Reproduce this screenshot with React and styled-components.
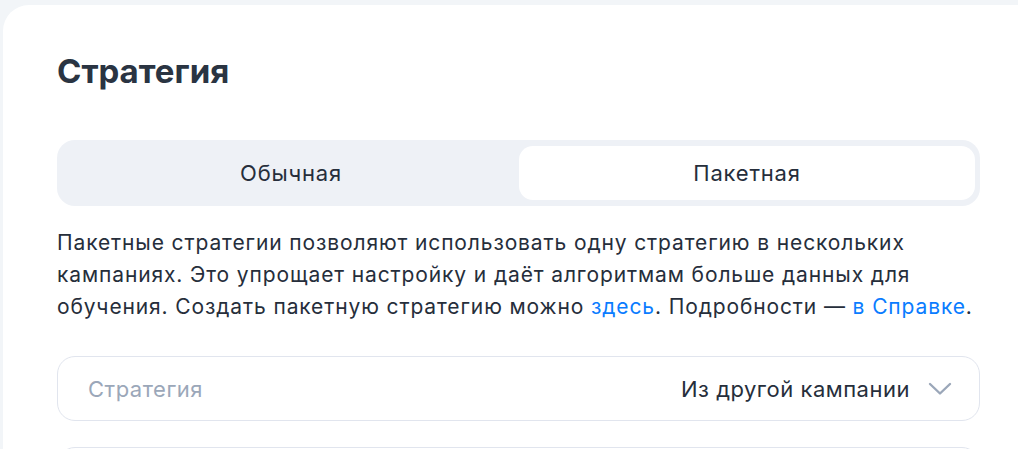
import React from "react";
import styled, { createGlobalStyle } from "styled-components";

const Global = createGlobalStyle`
  html, body { margin: 0; padding: 0; background: #f2f5f8; }
  body { font-family: Inter, "Noto Sans", sans-serif; color: #262e3b; }
  * { box-sizing: border-box; }
`;

const Page = styled.div`
  padding: 5px 0 0 3px;
  height: 449px;
  overflow: hidden;
`;

const Card = styled.section`
  background: #ffffff;
  border-top-left-radius: 26px;
  padding: 44px 38px 40px 54px;
  min-height: 600px;
`;

const Title = styled.h2`
  margin: 0;
  font-size: 33px;
  line-height: 44px;
  font-weight: 700;
  color: #2a3442;
  letter-spacing: 0;
`;

const Segmented = styled.div`
  margin-top: 47px;
  display: grid;
  grid-template-columns: 1fr 1fr;
  padding: 6px 5px 6px 6px;
  height: 66px;
  background: #eef1f6;
  border-radius: 18px;
`;

const Segment = styled.button`
  border: none;
  font: inherit;
  font-size: 22px;
  letter-spacing: 0.8px;
  color: #262e3b;
  background: ${(p) => (p.$active ? "#ffffff" : "transparent")};
  border-radius: 14px;
  cursor: pointer;
  padding: 0;
`;

const Description = styled.p`
  margin: 21px 0 0;
  font-size: 21px;
  letter-spacing: 0.88px;
  line-height: 32px;
  color: #262e3b;
`;

const Link = styled.a`
  color: #0a7cff;
  text-decoration: none;
`;

const Select = styled.div`
  margin-top: ${(p) => p.$mt || 0}px;
  height: 65px;
  border: 1px solid #e1e5ee;
  border-radius: 18px;
  display: flex;
  align-items: center;
  padding: 0 27px 0 30px;
  gap: 18px;
  font-size: 22px;
  letter-spacing: 0.5px;
`;

const Placeholder = styled.span`
  flex: 1;
  color: #9ba7b9;
`;

const Value = styled.span`
  color: #262e3b;
`;

const Chevron = () => (
  <svg width="24" height="14" viewBox="0 0 24 14" fill="none">
    <path d="M2 2L12 11.5L22 2" stroke="#9ba7b9" strokeWidth="2.4" strokeLinecap="round" strokeLinejoin="round" />
  </svg>
);

export default function App() {
  return (
    <>
      <Global />
      <Page>
        <Card>
          <Title>Стратегия</Title>
          <Segmented>
            <Segment>Обычная</Segment>
            <Segment $active>Пакетная</Segment>
          </Segmented>
          <Description>
            Пакетные стратегии позволяют использовать одну стратегию в нескольких кампаниях. Это упрощает
            настройку и даёт алгоритмам больше данных для обучения. Создать пакетную стратегию можно{" "}
            <Link href="#">здесь</Link>. Подробности — <Link href="#">в Справке</Link>.
          </Description>
          <Select $mt={33}>
            <Placeholder>Стратегия</Placeholder>
            <Value>Из другой кампании</Value>
            <Chevron />
          </Select>
          <Select $mt={26}>
            <Placeholder></Placeholder>
          </Select>
        </Card>
      </Page>
    </>
  );
}
